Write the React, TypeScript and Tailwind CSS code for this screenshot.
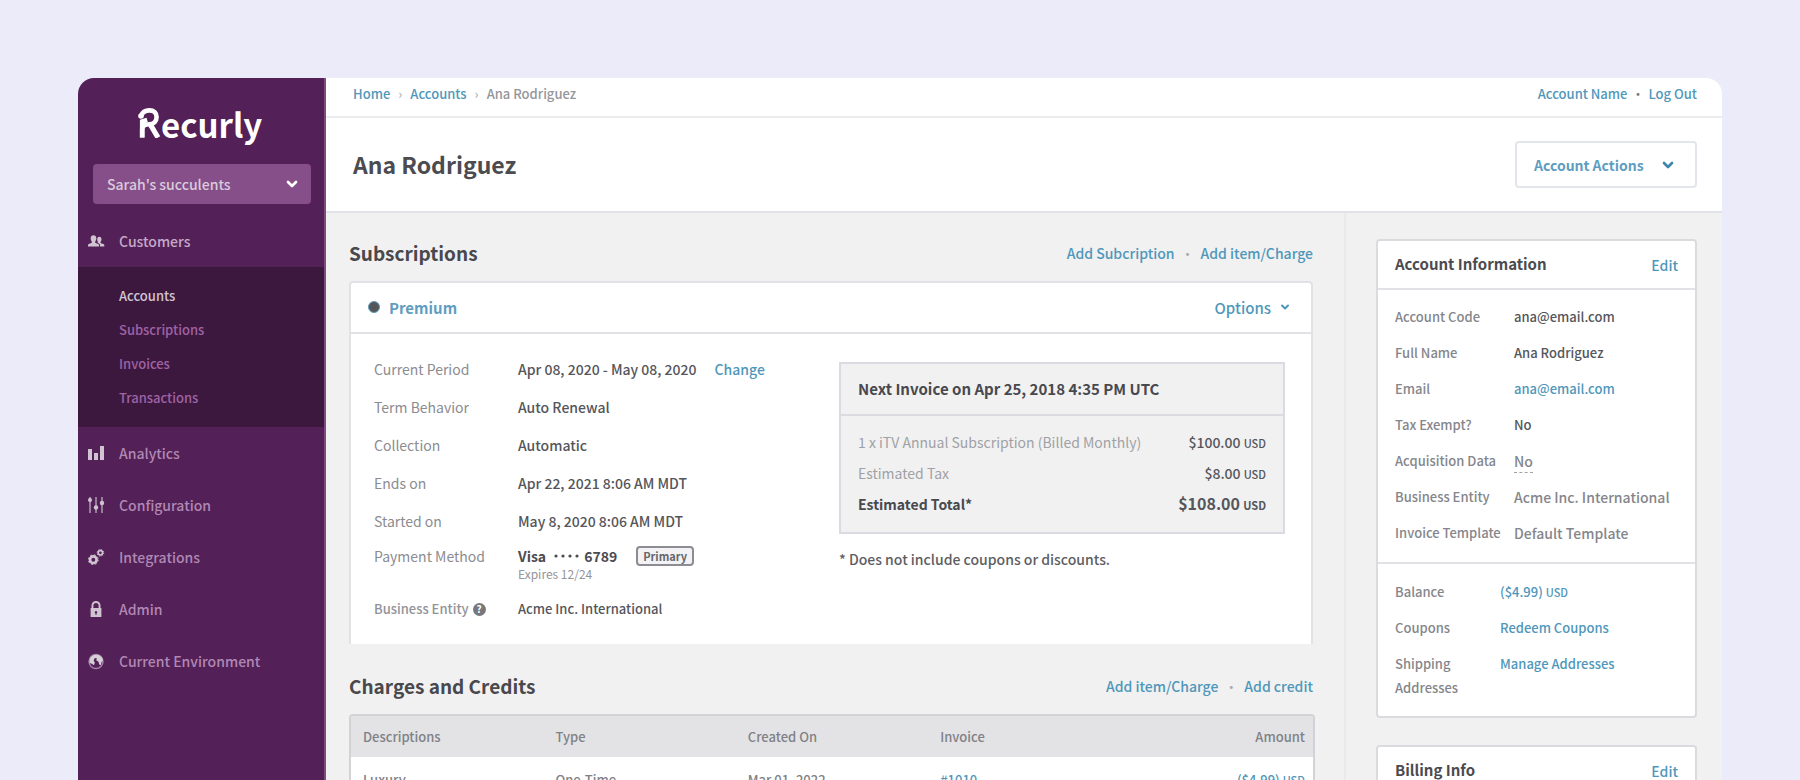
import { ChevronDown } from "lucide-react";
import type { ReactNode } from "react";

const font = "font-['Noto_Sans_CJK_SC',sans-serif]";

function LinkA({ children, className = "" }: { children: ReactNode; className?: string }) {
  return <a href="#" className={`font-medium text-[#4f97ba] ${className}`}>{children}</a>;
}

function Usd({ amount }: { amount: string }) {
  return <>{amount} <span className="text-[11px] leading-none">USD</span></>;
}

function Logo() {
  return (
    <a href="#" aria-label="Recurly" className="mt-[21px] ml-[60px] flex h-[50px] items-start text-[33px] leading-[50px] font-bold text-white">
      <svg viewBox="0 0 23 30" className="mt-[9px] h-[30px] w-[23px] shrink-0" fill="none" stroke="currentColor" aria-hidden="true">
        <circle cx="3" cy="8" r="2.800" fill="currentColor" stroke="none" />
        <path d="M3 8C4.500 4 8 2.400 11.300 2.400c4.800 0 7.300 2.600 7.300 6.600 0 4.600-3 7.300-7.600 7.300-4 0-6.800 1.200-6.800 5.200v8" strokeWidth="4.600" />
        <path d="M4.200 29.500V13.500l5-1.500" strokeWidth="4.600" />
        <path d="M12.300 16.500 20 29.500" strokeWidth="5.200" />
      </svg>
      ecurly
    </a>
  );
}

const iconColor = "size-[18px] shrink-0 fill-[#cfc4d0]";

function PeopleIcon() {
  return (
    <svg viewBox="0 0 18 18" className={iconColor} aria-hidden="true">
      <path d="M1 14.500v-1.600c0-1 2.600-1.600 3.800-2.200V9.500C4 8.700 3.700 7.500 3.700 6.300c0-2 1.100-3 2.800-3s2.800 1 2.800 3c0 1.200-.3 2.400-1.100 3.200v1.200c1.200.6 3.800 1.200 3.800 2.200v1.600z" />
      <path d="M10.700 9.400c-.5-.6-.6-1.400-.5-2.400.2-1.400 1-2.200 2.100-2.200 1.400 0 2.200.9 2.200 2.500 0 1-.3 1.900-.9 2.500v1.100c1 .5 3.700 1 3.700 2v1.600H13v-1.400c0-1.200-1.300-1.900-2.300-2.400z" />
    </svg>
  );
}
function BarsIcon() {
  return (
    <svg viewBox="0 0 18 18" className={iconColor} aria-hidden="true">
      <path d="M1 5h4v11H1zM7 9h4v7H7zM13 2h4v14h-4z" />
    </svg>
  );
}
function SlidersIcon() {
  return (
    <svg viewBox="0 0 18 18" className={iconColor} aria-hidden="true">
      <path d="M2.200 1h1.600v16H2.200zM8.200 1h1.600v16H8.200zM14.200 1h1.600v16h-1.600z" opacity="0.7" />
      <circle cx="3" cy="4" r="2" /><circle cx="9" cy="11.500" r="2.200" /><circle cx="15" cy="7" r="2.200" />
    </svg>
  );
}
function GearsIcon() {
  return (
    <svg viewBox="0 0 18 18" className="size-[18px] shrink-0 fill-none stroke-[#cfc4d0]" aria-hidden="true">
      <circle cx="6.300" cy="11.700" r="3.300" strokeWidth="2.700" />
      <circle cx="6.300" cy="11.700" r="4.900" strokeWidth="1" strokeDasharray="1.920 1.930" />
      <circle cx="13.400" cy="4.800" r="2.200" strokeWidth="1.700" />
      <circle cx="13.400" cy="4.800" r="3.300" strokeWidth="1" strokeDasharray="1.290 1.300" />
    </svg>
  );
}
function LockIcon() {
  return (
    <svg viewBox="0 0 18 18" className={iconColor} aria-hidden="true">
      <path fillRule="evenodd" d="M4.500 8V5.500a4.500 4.500 0 0 1 9 0V8h.9v9H3.600V8zM6.400 8h5.200V5.500a2.600 2.600 0 0 0-5.200 0zM9 10.900a1.300 1.300 0 0 0-.6 2.400v1.400h1.200v-1.400a1.300 1.300 0 0 0-.6-2.400z" />
    </svg>
  );
}
function GlobeIcon() {
  return (
    <svg viewBox="0 0 18 18" className="size-[18px] shrink-0" aria-hidden="true">
      <circle cx="9" cy="9.500" r="7" className="fill-none stroke-[#a782ab]" strokeWidth="1.400" />
      <path className="fill-[#d6d0d6]" d="M5 4C7 2.600 9 2.400 11 2.900c3 .8 4.900 3 5 5.800l-1.400 1.200-.8 3.300-1.600-.6-.6-2.800-2.400-1.600.8-1.800L7.800 6 6.600 8.400l1.200 2.200-.8 2.700-2.200-1.500-2.200-.9C2.200 8 3 5.600 5 4z" />
    </svg>
  );
}

const lowerNav = [
  { label: "Analytics", icon: <BarsIcon /> },
  { label: "Configuration", icon: <SlidersIcon /> },
  { label: "Integrations", icon: <GearsIcon /> },
  { label: "Admin", icon: <LockIcon /> },
  { label: "Current Environment", icon: <GlobeIcon /> },
];

function Sidebar() {
  return (
    <nav className="w-[248px] shrink-0 border-r-2 border-[#7d4d81] bg-[#532057] text-sm">
      <Logo />
      <button className="mt-[15px] ml-[15px] flex h-10 w-[218px] items-center justify-between rounded bg-[#874f8a] pr-[11px] pl-[14px] font-medium text-[#d9cbda]">
        Sarah's succulents
        <ChevronDown className="size-4 text-white" strokeWidth={4} />
      </button>
      <a href="#" className="mt-[12px] flex h-[51px] items-center gap-[14px] pb-[2px] pl-[9px] font-medium text-[#c5a9c8]"><PeopleIcon />Customers</a>
      <ul className="flex flex-col bg-[#3c183f] py-3 pl-[41px] text-[13px] leading-[34px] font-medium text-[#9f63a4]">
        <li><a href="#" className="text-[#d0c5d1]">Accounts</a></li>
        <li><a href="#">Subscriptions</a></li>
        <li><a href="#">Invoices</a></li>
        <li><a href="#">Transactions</a></li>
      </ul>
      <ul className="font-medium text-[#b088b4]">
        {lowerNav.map((n) => (
          <li key={n.label}><a href="#" className="flex h-[52px] items-center gap-[14px] pl-[9px]">{n.icon}{n.label}</a></li>
        ))}
      </ul>
    </nav>
  );
}

function Header() {
  return (
    <header className="bg-white">
      <div className="flex h-10 items-center justify-between border-b-2 border-[#ececee] pr-[25px] pb-[7px] pl-[27px] text-[13px]">
        <div className="flex gap-2 font-medium text-[#95969a]">
          <LinkA>Home</LinkA><span className="text-[#b0b0b4]">›</span><LinkA>Accounts</LinkA><span className="text-[#b0b0b4]">›</span><span>Ana Rodriguez</span>
        </div>
        <div className="flex gap-1"><LinkA>Account Name</LinkA><span className="text-[#77787c]">•</span><LinkA>Log Out</LinkA></div>
      </div>
      <div className="flex h-[95px] items-center justify-between border-b-2 border-[#e2e3e8] pr-[25px] pl-[27px]">
        <h1 className="text-[23px] font-bold text-[#4b4b50]">Ana Rodriguez</h1>
        <button className="flex h-[47px] w-[182px] items-center justify-between rounded border-2 border-[#e2e5ea] pr-[19px] pl-[17px] text-sm font-bold text-[#5f9dbf]">
          Account Actions<ChevronDown className="size-4 text-[#3f86ab]" strokeWidth={4} />
        </button>
      </div>
    </header>
  );
}

function SectionHead({ title, links }: { title: string; links: [string, string] }) {
  return (
    <div className="flex items-center justify-between leading-[30px]">
      <h2 className="text-[19px] font-bold text-[#48484d]">{title}</h2>
      <div className="flex gap-[6px] text-sm"><LinkA>{links[0]}</LinkA><span className="text-[#aaabb0]">•</span><LinkA>{links[1]}</LinkA></div>
    </div>
  );
}

function Detail({ label, children }: { label: ReactNode; children: ReactNode }) {
  return (
    <>
      <dt className="text-[#8b8c91]">{label}</dt>
      <dd className="font-medium text-[#55565b]">{children}</dd>
    </>
  );
}

function Subscription() {
  return (
    <section className="h-[363px] rounded-t border-2 border-b-0 border-[#e1e2e6] bg-white text-sm">
      <div className="flex h-[51px] items-center justify-between border-b-2 border-[#e1e2e6] pr-[20px] pl-[17px]">
        <div className="flex items-center gap-[9px] text-[15px] font-bold text-[#5f9dbf]">
          <span className="size-3 rounded-full border border-[#5f9dbf] bg-[#55565a]" />Premium
        </div>
        <button className="flex items-center gap-2 text-[15px] font-medium text-[#4f97ba]">Options<ChevronDown className="size-3" strokeWidth={4} /></button>
      </div>
      <div className="flex items-start justify-between pr-[26px] pl-[23px]">
        <dl className="mt-[16px] grid grid-cols-[144px_auto] leading-[38px]">
          <Detail label="Current Period">Apr 08, 2020 - May 08, 2020<LinkA className="ml-[18px]">Change</LinkA></Detail>
          <Detail label="Term Behavior">Auto Renewal</Detail>
          <Detail label="Collection">Automatic</Detail>
          <Detail label="Ends on">Apr 22, 2021 8:06 AM MDT</Detail>
          <Detail label="Started on">May 8, 2020 8:06 AM MDT</Detail>
          <dt className="pt-[6px] leading-5 text-[#8b8c91]">Payment Method</dt>
          <dd className="pt-[6px] leading-5 text-[#4b4c51]">
            <span className="flex items-center font-bold">Visa
              <svg viewBox="0 0 26 4" className="mr-1 ml-2 h-1 w-[26px] fill-current" role="img" aria-label="ending in">
                <circle cx="2" cy="2" r="1.600" /><circle cx="9" cy="2" r="1.600" /><circle cx="16" cy="2" r="1.600" /><circle cx="23" cy="2" r="1.600" />
              </svg>
              6789
              <span className="ml-[19px] rounded border-2 border-[#8c8d92] bg-[#f3f3f5] px-[5px] text-[11px] leading-4 text-[#66676c]">Primary</span></span>
            <span className="block text-xs leading-4 text-[#94959a]">Expires 12/24</span>
          </dd>
          <dt className="flex items-center gap-1 pt-2 text-[13px] font-medium text-[#929398]">Business Entity
            <span className="flex size-[13px] items-center justify-center rounded-full bg-[#77787c] text-[10px] leading-3 font-bold text-white">?</span></dt>
          <dd className="pt-2 text-[13px] font-medium text-[#55565b]">Acme Inc. International</dd>
        </dl>
        <div className="mt-[28px] w-[446px]">
          <div className="border-2 border-[#dadbe0] bg-[#f1f1f1] text-[#55565b]">
            <h3 className="border-b-2 border-[#dadbe0] px-[17px] text-[15px] leading-[50px] font-bold text-[#48494e]">Next Invoice on Apr 25, 2018 4:35 PM UTC</h3>
            <dl className="grid grid-cols-[1fr_auto] px-[17px] pt-[11px] pb-3 leading-[31px]">
              <dt className="text-[#a0a1a6]">1 x iTV Annual Subscription (Billed Monthly)</dt><dd className="text-right font-medium"><Usd amount="$100.00" /></dd>
              <dt className="text-[#a0a1a6]">Estimated Tax</dt><dd className="text-right font-medium"><Usd amount="$8.00" /></dd>
              <dt className="font-bold text-[#48494e]">Estimated Total*</dt><dd className="text-right font-bold text-[#55565b]"><span className="text-base leading-none">$108.00</span> <span className="text-[11px] leading-none">USD</span></dd>
            </dl>
          </div>
          <p className="mt-[13px] leading-6 font-medium text-[#5d5e63]">* Does not include coupons or discounts.</p>
        </div>
      </div>
    </section>
  );
}

function Charges() {
  return (
    <div className="-mr-0.5">
      <table className="w-full table-fixed border-separate border-spacing-0 rounded-t border-2 border-b-0 border-[#d2d3d7] bg-white text-left text-[13px] text-[#808186]">
        <thead>
          <tr className="h-[41px] bg-[#e3e3e5] *:font-medium">
            <th className="w-1/5 pl-3">Descriptions</th><th className="w-1/5 pl-3">Type</th><th className="w-1/5 pl-3">Created On</th><th className="w-1/5 pl-3">Invoice</th><th className="w-1/5 pr-2 text-right">Amount</th>
          </tr>
        </thead>
        <tbody>
          <tr className="h-[46px] *:font-medium">
            <td className="pl-3">Luxury</td><td className="pl-3">One-Time</td><td className="pl-3">Mar 01, 2022</td><td className="pl-3"><LinkA>#1010</LinkA></td><td className="pr-2 text-right text-[#4f97ba]"><Usd amount="($4.99)" /></td>
          </tr>
        </tbody>
      </table>
    </div>
  );
}

function CardHead({ title }: { title: string }) {
  return (
    <div className="flex h-[49px] items-center justify-between border-b-2 border-[#e1e2e6] px-[17px] text-[15px]">
      <h3 className="font-bold text-[#4b4b50]">{title}</h3><LinkA className="text-sm">Edit</LinkA>
    </div>
  );
}

function Aside() {
  return (
    <aside className="w-[378px] shrink-0 border-l-2 border-[#eaeaec] pt-[26px] pr-[25px] pl-[30px] text-[13px]">
      <section className="rounded border-2 border-[#dadbdf] bg-white">
        <CardHead title="Account Information" />
        <dl className="grid h-[274px] grid-cols-[119px_1fr] content-start border-b-2 border-[#e1e2e6] px-[17px] pt-[9px] leading-9 font-medium text-[#85868b]">
          <dt>Account Code</dt><dd className="text-[#55565b]">ana@email.com</dd>
          <dt>Full Name</dt><dd className="text-[#55565b]">Ana Rodriguez</dd>
          <dt>Email</dt><dd><LinkA>ana@email.com</LinkA></dd>
          <dt>Tax Exempt?</dt><dd className="text-[#55565b]">No</dd>
          <dt>Acquisition Data</dt><dd className="text-sm leading-9"><span className="border-b border-dashed border-[#a0a1a6] pb-px">No</span></dd>
          <dt>Business Entity</dt><dd className="text-sm leading-9">Acme Inc. International</dd>
          <dt>Invoice Template</dt><dd className="text-sm leading-9">Default Template</dd>
        </dl>
        <dl className="grid h-[152px] grid-cols-[105px_1fr] content-start gap-y-3 px-[17px] pt-4 leading-6 font-medium text-[#85868b]">
          <dt>Balance</dt><dd className="text-[#4f97ba]"><Usd amount="($4.99)" /></dd>
          <dt>Coupons</dt><dd><LinkA>Redeem Coupons</LinkA></dd>
          <dt>Shipping Addresses</dt><dd><LinkA>Manage Addresses</LinkA></dd>
        </dl>
      </section>
      <section className="mt-[27px] rounded border-2 border-[#dadbdf] bg-white"><CardHead title="Billing Info" /></section>
    </aside>
  );
}

export default function App() {
  return (
    <div className={`h-screen overflow-hidden bg-[#ecebfa] px-[78px] pt-[78px] ${font}`}>
      <div className="flex h-full overflow-hidden rounded-t-2xl bg-[#f1f1f1]">
        <Sidebar />
        <div className="flex min-w-0 flex-1 flex-col">
          <Header />
          <div className="flex flex-1">
            <main className="flex min-w-0 flex-1 flex-col pt-[25px] pr-[31px] pl-[23px]">
              <SectionHead title="Subscriptions" links={["Add Subcription", "Add item/Charge"]} />
              <div className="mt-[13px] mb-[27px]"><Subscription /></div>
              <SectionHead title="Charges and Credits" links={["Add item/Charge", "Add credit"]} />
              <div className="mt-[13px]"><Charges /></div>
            </main>
            <Aside />
          </div>
        </div>
      </div>
    </div>
  );
}
